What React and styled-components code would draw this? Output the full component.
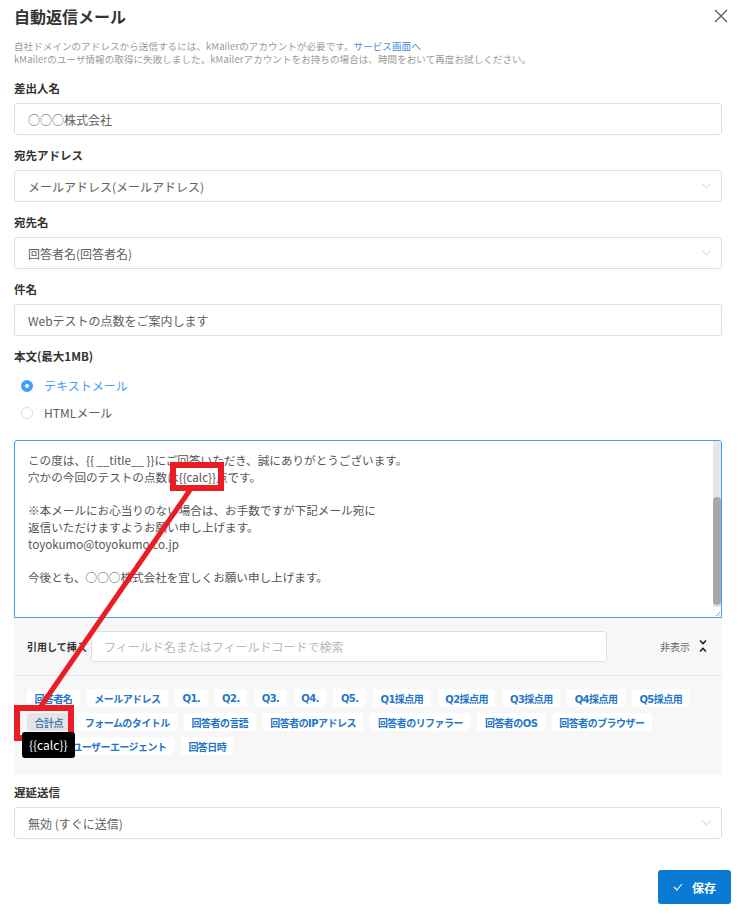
import React from "react";
import styled, { createGlobalStyle } from "styled-components";

const GlobalStyle = createGlobalStyle`
  body {
    margin: 0;
    background: #fff;
    font-family: "Noto Sans CJK JP", "Noto Sans", sans-serif;
    color: #333;
  }
  * { box-sizing: border-box; }
`;

const Page = styled.div`
  position: relative;
  width: 738px;
  height: 914px;
  padding: 0 16px 0 14px;
  overflow: hidden;
`;

const Header = styled.div`
  height: 32px;
  display: flex;
  align-items: center;
  justify-content: space-between;
`;

const Title = styled.h1`
  margin: 0;
  font-size: 16px;
  font-weight: 700;
  color: #333;
`;

const CloseButton = styled.button`
  border: none;
  background: none;
  padding: 0;
  margin-right: -6px;
  display: flex;
  cursor: pointer;
`;

const Info = styled.div`
  margin-top: 8px;
  font-size: 9.5px;
  line-height: 13px;
  color: #9a9a9a;
  letter-spacing: 0.1px;

  a {
    color: #3b8de0;
    text-decoration: none;
  }
`;

const Field = styled.div`
  margin-top: ${(p) => p.$top || 12}px;
`;

const Label = styled.div`
  height: 16px;
  line-height: 16px;
  font-size: 11.5px;
  font-weight: 700;
  color: #333;
  margin-bottom: 7px;
`;

const InputBox = styled.div`
  height: 32px;
  display: flex;
  align-items: center;
  justify-content: space-between;
  padding: 0 10px 0 13px;
  border: 1px solid #dcdfe6;
  border-radius: 3px;
  background: #fff;
  font-size: 12px;
  color: #606060;
`;

const RadioList = styled.div`
  margin-top: 8px;
  display: flex;
  flex-direction: column;
`;

const RadioRow = styled.label`
  height: 27px;
  display: flex;
  align-items: center;
  gap: 11px;
  padding-left: 7px;
  font-size: 12px;
  color: ${(p) => (p.$checked ? "#409eff" : "#606060")};
`;

const RadioDot = styled.span`
  width: 12px;
  height: 12px;
  border-radius: 50%;
  border: ${(p) => (p.$checked ? "4px solid #409eff" : "1px solid #dcdfe6")};
  background: #fff;
`;

const TextArea = styled.div`
  margin-top: 14px;
  height: 178px;
  display: flex;
  border: 1px solid #409eff;
  border-radius: 3px 3px 0 0;
  background: #fff;
  overflow: hidden;
`;

const TextBody = styled.div`
  flex: 1;
  padding: 11px 13px;
  font-size: 11.6px;
  line-height: 16.7px;
  color: #555;
  white-space: pre;
`;

const ScrollTrack = styled.div`
  width: 8px;
  display: flex;
  flex-direction: column;
  background: #e6e6e6;
`;

const ScrollThumb = styled.div`
  margin-top: 56px;
  height: 108px;
  border-radius: 4px;
  background: #a8a8a8;
`;

const ResizeGrip = styled.div`
  margin-top: auto;
  height: 10px;
  background: #fff;
  display: flex;
  align-items: flex-end;
  justify-content: flex-end;
`;

const InsertPanel = styled.div`
  background: #f7f7f7;
  padding-bottom: 19px;
`;

const SearchRow = styled.div`
  display: flex;
  align-items: center;
  padding: 13px 0 0 13px;
  height: 58px;
  border-bottom: 1px solid #e6e6e6;
`;

const SearchLabel = styled.span`
  width: 64px;
  font-size: 10px;
  font-weight: 700;
  color: #333;
  margin-bottom: 14px;
`;

const SearchInput = styled.div`
  width: 516px;
  height: 31px;
  margin-bottom: 14px;
  display: flex;
  align-items: center;
  padding-left: 12px;
  background: #fff;
  border: 1px solid #dcdfe6;
  border-radius: 3px;
  font-size: 12px;
  color: #b8b8b8;
`;

const Toggle = styled.div`
  margin-left: 53px;
  margin-bottom: 14px;
  display: flex;
  align-items: center;
  gap: 9px;
  font-size: 10px;
  color: #666;
`;

const ChipWrap = styled.div`
  display: flex;
  flex-wrap: wrap;
  gap: 6px 7px;
  padding: 13px 13px 0 13px;
`;

const ChipSlot = styled.div`
  position: relative;
  display: flex;
`;

const Chip = styled.span`
  display: flex;
  align-items: center;
  height: 18px;
  padding: 0 7.5px;
  border-radius: 3px;
  font-family: "DejaVu Sans", "Noto Sans CJK JP", sans-serif;
  font-size: 10px;
  letter-spacing: -0.55px;
  font-weight: 700;
  color: ${(p) => (p.$active ? "#4a7fb5" : "#2576c8")};
  background: ${(p) => (p.$active ? "#e4e4e4" : "#fff")};
  white-space: nowrap;
`;

const Tooltip = styled.div`
  position: absolute;
  top: 19px;
  left: -5px;
  z-index: 2;
  padding: 4px 7px;
  border-radius: 3px;
  background: #000;
  color: #fff;
  font-size: 12px;
  line-height: 18px;
  white-space: nowrap;
`;

const Footer = styled.div`
  margin-top: 31px;
  margin-right: -9px;
  display: flex;
  justify-content: flex-end;
`;

const SaveButton = styled.button`
  width: 73px;
  height: 34px;
  display: flex;
  align-items: center;
  justify-content: center;
  gap: 9px;
  border: none;
  border-radius: 3px;
  background: #0a7bd4;
  color: #fff;
  font-family: inherit;
  font-size: 12px;
  font-weight: 700;
`;

const Annotation = styled.svg`
  position: absolute;
  top: 0;
  left: 0;
  pointer-events: none;
`;

const Chevron = () => (
  <svg width="9" height="6" viewBox="0 0 9 6">
    <polyline points="0.5,0.5 4.5,5 8.5,0.5" fill="none" stroke="#c0c4cc" strokeWidth="0.9" />
  </svg>
);

const body = `この度は、{{ __title__ }}にご回答いただき、誠にありがとうございます。
穴かの今回のテストの点数は{{calc}}点です。

※本メールにお心当りのない場合は、お手数ですが下記メール宛に
返信いただけますようお願い申し上げます。
toyokumo@toyokumo.co.jp

今後とも、○○○株式会社を宜しくお願い申し上げます。`;

const chips = [
  "回答者名", "メールアドレス", "Q1.", "Q2.", "Q3.", "Q4.", "Q5.",
  "Q1採点用", "Q2採点用", "Q3採点用", "Q4採点用", "Q5採点用",
  "合計点", "フォームのタイトル", "回答者の言語", "回答者のIPアドレス",
  "回答者のリファラー", "回答者のOS", "回答者のブラウザー",
  "回答者のユーザーエージェント", "回答日時",
];

export default function App() {
  return (
    <>
      <GlobalStyle />
      <Page>
        <Header>
          <Title>自動返信メール</Title>
          <CloseButton>
            <svg width="14" height="14" viewBox="0 0 14 14">
              <path d="M1 1 L13 13 M13 1 L1 13" stroke="#555" strokeWidth="1.2" />
            </svg>
          </CloseButton>
        </Header>
        <Info>
          <div>自社ドメインのアドレスから送信するには、kMailerのアカウントが必要です。<a href="#">サービス画面へ</a></div>
          <div>kMailerのユーザ情報の取得に失敗しました。kMailerアカウントをお持ちの場合は、時間をおいて再度お試しください。</div>
        </Info>

        <Field $top={14}>
          <Label>差出人名</Label>
          <InputBox>○○○株式会社</InputBox>
        </Field>
        <Field>
          <Label>宛先アドレス</Label>
          <InputBox>メールアドレス(メールアドレス)<Chevron /></InputBox>
        </Field>
        <Field>
          <Label>宛先名</Label>
          <InputBox>回答者名(回答者名)<Chevron /></InputBox>
        </Field>
        <Field>
          <Label>件名</Label>
          <InputBox>Webテストの点数をご案内します</InputBox>
        </Field>

        <Field>
          <Label>本文(最大1MB)</Label>
          <RadioList>
            <RadioRow $checked><RadioDot $checked />テキストメール</RadioRow>
            <RadioRow><RadioDot />HTMLメール</RadioRow>
          </RadioList>
          <TextArea>
            <TextBody>{body}</TextBody>
            <ScrollTrack>
              <ScrollThumb />
              <ResizeGrip>
                <svg width="6" height="6" viewBox="0 0 6 6">
                  <path d="M1 5 L5 1 M3.5 5 L5 3.5" stroke="#888" strokeWidth="0.8" />
                </svg>
              </ResizeGrip>
            </ScrollTrack>
          </TextArea>
          <InsertPanel>
            <SearchRow>
              <SearchLabel>引用して挿入</SearchLabel>
              <SearchInput>フィールド名またはフィールドコードで検索</SearchInput>
              <Toggle>
                非表示
                <svg width="8" height="14" viewBox="0 0 8 14">
                  <polyline points="1,1.5 4,4.5 7,1.5" fill="none" stroke="#222" strokeWidth="1.6" />
                  <polyline points="1,12.5 4,9.5 7,12.5" fill="none" stroke="#222" strokeWidth="1.6" />
                </svg>
              </Toggle>
            </SearchRow>
            <ChipWrap>
              {chips.map((c) => (
                <ChipSlot key={c}>
                  <Chip $active={c === "合計点"}>{c}</Chip>
                  {c === "合計点" && <Tooltip>{"{{calc}}"}</Tooltip>}
                </ChipSlot>
              ))}
            </ChipWrap>
          </InsertPanel>
        </Field>

        <Field $top={10}>
          <Label>遅延送信</Label>
          <InputBox>無効 (すぐに送信)<Chevron /></InputBox>
        </Field>

        <Footer>
          <SaveButton>
            <svg width="10" height="8" viewBox="0 0 10 8">
              <polyline points="1,4 3.8,7 9,1" fill="none" stroke="#fff" strokeWidth="1.1" />
            </svg>
            保存
          </SaveButton>
        </Footer>

        <Annotation width="738" height="914" viewBox="0 0 738 914">
          <rect x="173" y="465" width="48" height="23" fill="none" stroke="#ea1c24" strokeWidth="6" />
          <rect x="17" y="708" width="54" height="30" fill="none" stroke="#ea1c24" strokeWidth="6" />
          <line x1="190" y1="490" x2="41" y2="706" stroke="#ea1c24" strokeWidth="5" />
        </Annotation>
      </Page>
    </>
  );
}
